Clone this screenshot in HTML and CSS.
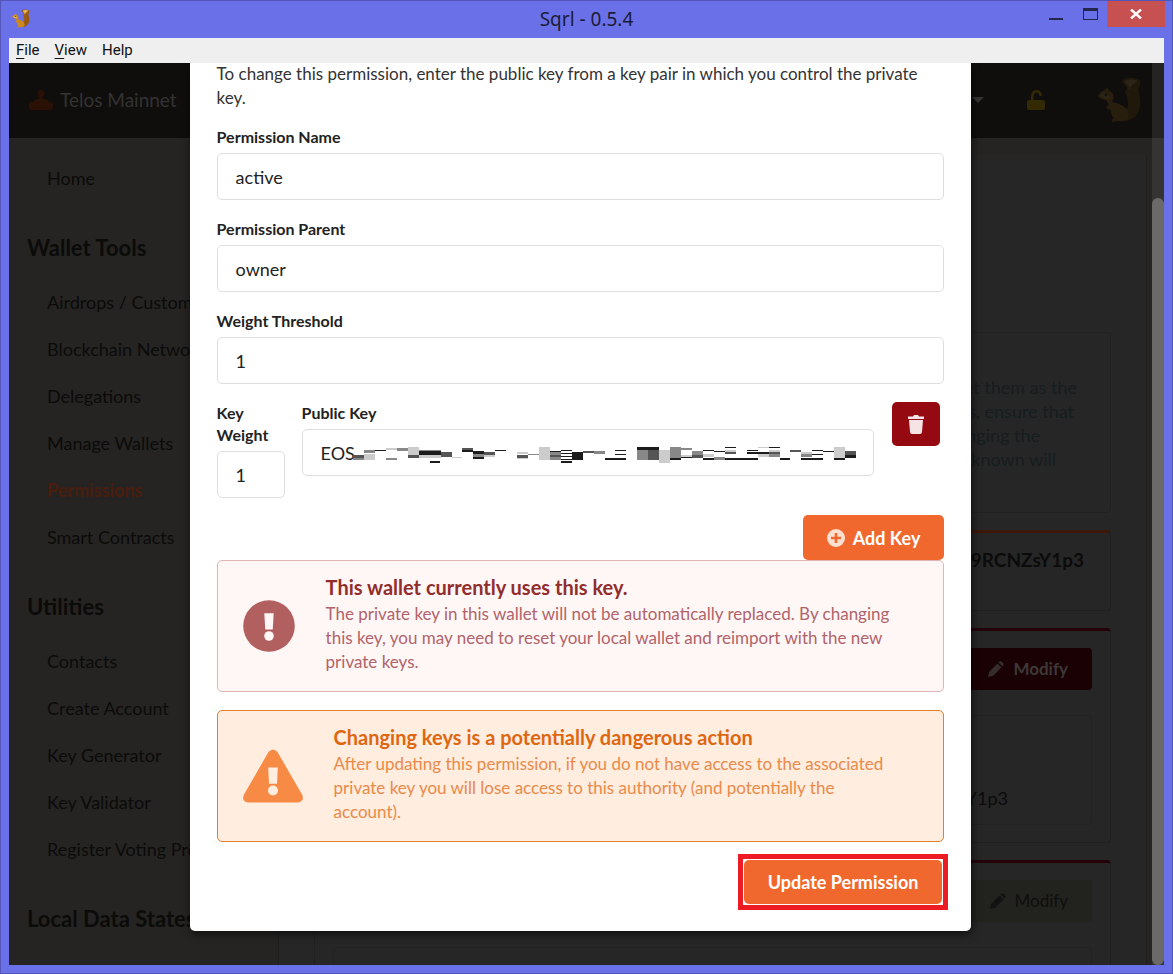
FILE: index.html
```html
<!DOCTYPE html>
<html lang="en">
<head>
<meta charset="utf-8">
<title>Sqrl - 0.5.4</title>
<link rel="stylesheet" href="styles.css">
</head>
<body>
<svg width="0" height="0" class="defs" aria-hidden="true">
  <symbol id="squirrel" viewBox="0 0 44 46">
    <path class="sq-tail" d="M26 2 Q34 -1 42 3 Q43 8 40 13 Q43 22 42 30 Q40 42 28 44 L24 38 Q31 33 30 25 Q30 20 27 15 Q31 12 27 8 Q25 6 24 5 Q25 3 26 2Z"/>
    <path class="sq-body" d="M0 19 Q3 14 7 13 L9 10 L11 14 Q16 16 16 21 Q14 24 14 25 Q20 26 25 29 Q32 34 30 41 Q28 45 20 44 L14 45 Q13 43 16 41 Q12 37 13 33 L9 32 Q7 30 11 28 Q9 25 8 23 Q3 23 0 19Z"/>
    <path class="sq-light" d="M2 19 L7 16 L13 21 L8 22Z M27 4 Q34 1 40 4 Q34 7 31 13 Q31 7 27 6Z"/>
    <circle class="sq-eye" cx="8" cy="18" r="1.4"/>
  </symbol>
  <symbol id="pencil" viewBox="0 0 16 16">
    <path d="M0 16 L1.200 10.800 L9.500 2.500 L13.500 6.500 L5.200 14.800 Z M10.500 1.500 Q12.300 -0.500 14 1 L15 2 Q16.500 3.700 14.500 5.500 Z"/>
  </symbol>
</svg>
<div class="window">
  <header class="titlebar">
    <svg class="app-icon"><use href="#squirrel"/></svg>
    <h1 class="window-title">Sqrl - 0.5.4</h1>
    <div class="window-controls">
      <button class="control" aria-label="Minimize"><span class="minimize"></span></button>
      <button class="control" aria-label="Maximize"><span class="maximize"></span></button>
      <button class="control close" aria-label="Close">
        <svg width="12" height="10" viewBox="0 0 12 10"><path d="M1 0.500 L11 9.500 M11 0.500 L1 9.500" stroke="#fff" stroke-width="2.400"/></svg>
      </button>
    </div>
  </header>
  <nav class="menubar">
    <button><u>F</u>ile</button>
    <button><u>V</u>iew</button>
    <button>Help</button>
  </nav>
  <div class="viewport">
    <div class="app">
      <header class="app-header">
        <svg class="network-icon" viewBox="0 0 24 20"><path d="M8.500 3.500 Q8.500 0 12 0 Q15.500 0 15.500 3.500 Q15.500 6 13.500 7 V8.500 Q19 9 19.500 12 H22 Q24 12 24 14 V18 Q24 20 22 20 H2 Q0 20 0 18 V14 Q0 12 2 12 H4.500 Q5 9 10.500 8.500 V7 Q8.500 6 8.500 3.500Z"/></svg>
        <span class="network-name">Telos Mainnet</span>
        <div class="header-tools">
          <span class="caret"></span>
          <svg class="lock-icon" viewBox="0 0 18 20"><path d="M2 10 H4 V7 Q4 0 9.500 0 Q14.500 0 15 6 H12.500 Q12 2.500 9.500 2.500 Q6.500 2.500 6.500 7 V10 H16 Q18 10 18 12 V18 Q18 20 16 20 H2 Q0 20 0 18 V12 Q0 10 2 10Z"/></svg>
          <svg class="header-logo"><use href="#squirrel"/></svg>
        </div>
      </header>
      <div class="columns">
        <nav class="sidebar">
          <a href="#">Home</a>
          <h2>Wallet Tools</h2>
          <a href="#">Airdrops / Custom</a>
          <a href="#">Blockchain Networks</a>
          <a href="#">Delegations</a>
          <a href="#">Manage Wallets</a>
          <a href="#" class="active">Permissions</a>
          <a href="#">Smart Contracts</a>
          <h2>Utilities</h2>
          <a href="#">Contacts</a>
          <a href="#">Create Account</a>
          <a href="#">Key Generator</a>
          <a href="#">Key Validator</a>
          <a href="#">Register Voting Proxy</a>
          <h2>Local Data States</h2>
        </nav>
        <main class="content">
          <section class="notice">
            <span class="line-a">set them as the</span>
            <span class="line-b">keys, ensure that</span>
            <span class="line-c">changing the</span>
            <span class="line-d">unknown will</span>
          </section>
          <section class="card card-key"><h3>9RCNZsY1p3</h3></section>
          <section class="card card-red">
            <button class="modify modify-red"><svg><use href="#pencil"/></svg>Modify</button>
            <div class="key-box">Y1p3</div>
          </section>
          <section class="card card-red card-last">
            <button class="modify"><svg><use href="#pencil"/></svg>Modify</button>
            <div class="key-box"></div>
          </section>
        </main>
      </div>
      <div class="overlay">
        <form class="modal" role="dialog">
          <p class="intro">To change this permission, enter the public key from a key pair in which you control the private key.</p>
          <div class="field">
            <label for="name">Permission Name</label>
            <input id="name" type="text" value="active">
          </div>
          <div class="field">
            <label for="parent">Permission Parent</label>
            <input id="parent" type="text" value="owner">
          </div>
          <div class="field">
            <label for="threshold">Weight Threshold</label>
            <input id="threshold" type="text" value="1">
          </div>
          <div class="key-row">
            <div class="field weight">
              <label for="weight">Key Weight</label>
              <input id="weight" type="text" value="1">
            </div>
            <div class="field public-key">
              <label for="key">Public Key</label>
              <div class="masked">
                <input id="key" type="text" value="EOS">
                <svg class="mask" width="503" height="17" viewBox="0 0 503 17" shape-rendering="crispEdges" aria-hidden="true">
                  <path fill="#1c1c1c" d="M22 3h11v1h-11z M66 4h22v4h-22z M77 14h10v2h-10z M109 3h11v2h-11z M120 4h11v3h-11z M120 10h11v2h-11z M142 3h11v1h-11z M197 4h11v1h-11z M208 3h11v1h-11z M208 6h11v1h-11z M208 9h11v1h-11z M208 12h11v1h-11z M208 14h11v2h-11z M219 5h11v8h-11z M252 11h21v2h-21z M262 3h11v1h-11z M262 7h11v1h-11z M284 0h22v3h-22z M317 11h11v2h-11z M328 10h11v1h-11z M350 3h11v1h-11z M350 11h11v2h-11z M361 4h11v1h-11z M372 0h11v1h-11z M372 11h33v2h-33z M394 3h11v1h-11z M394 5h22v2h-22z M416 0h11v1h-11z M427 11h10v2h-10z M448 11h22v2h-22z M459 3h11v1h-11z M459 7h11v1h-11z M470 4h11v1h-11z M481 11h11v2h-11z M492 8h11v3h-11z"/>
                  <path fill="#555" d="M0 8h11v3h-11z M55 8h11v3h-11z M88 5h11v5h-11z M109 1h11v2h-11z M131 5h11v3h-11z M164 8h11v3h-11z M197 8h11v2h-11z M230 4h11v2h-11z M295 3h11v10h-11z M339 8h11v3h-11z M372 5h11v2h-11z M416 5h11v2h-11z M437 3h11v2h-11z M492 4h11v4h-11z"/>
                  <path fill="#888" d="M0 11h11v2h-11z M11 3h11v3h-11z M33 11h11v2h-11z M44 1h11v3h-11z M66 3h22v1h-22z M120 7h11v3h-11z M175 7h11v1h-11z M197 5h11v3h-11z M197 10h11v3h-11z M241 4h11v3h-11z M284 3h11v10h-11z M317 0h11v11h-11z M328 1h11v2h-11z M339 4h11v4h-11z M361 10h11v3h-11z M416 7h11v3h-11z M448 7h11v3h-11z"/>
                  <path fill="#ccc" d="M11 7h11v6h-11z M33 1h11v2h-11z M55 0h11v8h-11z M66 8h22v3h-22z M99 10h10v1h-10z M131 8h11v2h-11z M164 5h11v2h-11z M164 11h11v1h-11z M186 0h11v13h-11z M306 3h11v13h-11z M328 8h11v2h-11z M350 7h11v3h-11z M372 3h11v2h-11z M405 0h11v1h-11z M405 7h11v3h-11z M416 3h11v2h-11z M448 5h11v2h-11z M481 0h11v11h-11z"/>
                </svg>
              </div>
            </div>
            <button type="button" class="remove" aria-label="Remove key">
              <svg width="18" height="20" viewBox="0 0 18 20"><path d="M1 2.500 H6 L7 1 H11 L12 2.500 H17 V5 H1Z M2 6 H16 L15 18 Q14.800 20 13 20 H5 Q3.200 20 3 18Z"/></svg>
            </button>
          </div>
          <div class="actions">
            <button type="button" class="primary add">
              <svg width="18" height="18" viewBox="0 0 18 18"><circle cx="9" cy="9" r="9" fill="#fbe0d2"/><path d="M9 4 V14 M4 9 H14" stroke="#f0682d" stroke-width="2.600"/></svg>
              Add Key
            </button>
          </div>
          <div class="message error">
            <svg width="52" height="52" viewBox="0 0 52 52"><circle cx="26" cy="26" r="25.800" fill="#b15f5f"/><path fill="#fff6f6" d="M21.300 13.200 H30.700 L29.700 29.500 H22.300Z"/><circle cx="26" cy="36" r="4.800" fill="#fff6f6"/></svg>
            <div>
              <h2>This wallet currently uses this key.</h2>
              <p>The private key in this wallet will not be automatically replaced. By changing this key, you may need to reset your local wallet and reimport with the new private keys.</p>
            </div>
          </div>
          <div class="message warning">
            <svg width="60" height="54" viewBox="0 0 60 54"><path fill="#f78b46" d="M25.500 3 Q30 -2 34.500 3 L59 45.500 Q62 52 55.500 53.500 H4.500 Q-2 52 1 45.500Z"/><path fill="#ffeddf" d="M25.200 18.500 H34.800 L34 34.800 H26Z"/><circle cx="30" cy="41.500" r="5" fill="#ffeddf"/></svg>
            <div>
              <h2>Changing keys is a potentially dangerous action</h2>
              <p>After updating this permission, if you do not have access to the associated private key you will lose access to this authority (and potentially the account).</p>
            </div>
          </div>
          <div class="actions submit">
            <div class="highlight"><button type="button" class="primary update">Update Permission</button></div>
          </div>
        </form>
      </div>
    </div>
    <div class="scrollbar"><div class="thumb"></div></div>
  </div>
</div>
</body>
</html>
```
FILE: styles.css
```css
* { box-sizing: border-box; }
body { margin: 0; font-family: Lato, "Liberation Sans", sans-serif; font-size: 18px; line-height: 24px; color: #222; }
h1, h2, h3, p { margin: 0; }
button, input { font: inherit; color: inherit; }
button { border: 0; background: none; padding: 0; }
a { text-decoration: none; color: inherit; }
.defs { position: absolute; }

.window { display: flex; flex-direction: column; height: 100vh; padding: 0 8px 8px; border: 1px solid #5356b8; background: #6a70e8; overflow: hidden; }
.titlebar { display: grid; grid-template-columns: 1fr auto 1fr; flex: none; height: 37px; }
.app-icon { width: 18px; height: 19px; margin: 8px 0 0 3px; }
.sq-tail { fill: #9c5b0c; }
.sq-body { fill: #cf8a1c; }
.sq-light { fill: #ecb85a; }
.sq-eye { fill: #3a2408; }
.window-title { font: 19px/36px "Noto Sans", sans-serif; color: #1b1c35; }
.window-controls { display: flex; justify-content: flex-end; margin-right: -1px; }
.control { display: flex; justify-content: center; width: 34px; height: 26px; }
.minimize { width: 14px; height: 2px; margin-top: 17px; background: #25274a; }
.maximize { width: 15px; height: 12px; margin-top: 7px; border: 1px solid #25274a; border-top-width: 3px; }
.close { align-items: center; width: 58px; background: #c75050; }

.menubar { display: flex; gap: 15px; flex: none; height: 25px; padding: 0 7px; background: #efefef; font: 15px/25px Roboto, sans-serif; color: #111; }
.menubar u { text-underline-offset: 3px; }

.viewport { display: flex; flex: 1; min-height: 0; }
.app { position: relative; display: flex; flex-direction: column; flex: 1; min-width: 0; overflow: hidden; background: #252422; }
.scrollbar { width: 12px; padding-top: 135px; background: linear-gradient(#262422 75px, #363432 75px); }
.thumb { height: 100%; border-radius: 6px; background: #6b6a69; }

.app-header { display: flex; align-items: center; flex: none; height: 75px; padding: 0 10px 1px 20px; background: #0f0e0c; }
.network-icon { width: 24px; height: 20px; margin-right: 7px; fill: #2b1105; }
.network-name { font-size: 19px; color: #333; }
.header-tools { display: flex; align-items: center; margin-left: auto; }
.caret { border: 6px solid transparent; border-top-color: #333; border-bottom: 0; margin-right: 43px; }
.lock-icon { width: 18px; height: 20px; margin-right: 53px; fill: #332903; }
.header-logo { width: 44px; height: 46px; opacity: 0.13; }

.columns { display: flex; flex: 1; min-height: 0; padding: 17px 5px 0 0; }
.sidebar { flex: none; width: 269px; padding-left: 18px; color: #0b0b0a; white-space: nowrap; }
.sidebar a { display: block; padding-left: 20px; line-height: 47px; }
.sidebar .active { font-weight: 700; color: #4a1d0d; }
.sidebar h2 { padding: 32px 0 17px; font-size: 22px; line-height: 28px; font-weight: 700; }
.content { display: flex; flex-direction: column; gap: 17px; flex: 1; padding: 177px 35px 0; border: solid #201f1f; border-width: 0 1px; background: #262626; color: #0b0b0b; }
.notice { display: flex; flex-direction: column; align-items: flex-end; flex: none; height: 181px; padding-top: 42px; border: 1px solid #202122; border-radius: 4px; color: #161d20; }
.line-a { margin-right: 33px; }
.line-b { margin-right: 36px; }
.line-c { margin-right: 70px; }
.line-d { margin-right: 54px; }
.card { flex: none; border: 1px solid #202020; border-top: 3px solid #3d170a; border-radius: 4px; }
.card-key { height: 81px; padding: 15px 26px; text-align: right; }
.card-key h3 { font-size: 19px; line-height: 24px; }
.card-red { height: 215px; padding: 17px 18px; border-top-color: #25020a; }
.card-last { height: 130px; }
.modify { display: flex; align-items: center; gap: 9px; min-width: 124px; height: 42px; margin-left: auto; padding: 0 24px 0 21px; border-radius: 4px; background: #22221f; color: #0f0f0f; font-size: 17px; justify-content: flex-end; }
.modify svg { width: 16px; height: 16px; fill: currentColor; opacity: 0.8; }
.modify-red { background: #1a0103; color: #3d3838; font-weight: 700; }
.key-box { height: 110px; margin-top: 25px; padding: 70px 83px 0 0; border: 1px solid #222; border-radius: 4px; text-align: right; }

.overlay { position: absolute; inset: 0; display: flex; justify-content: center; align-items: flex-start; overflow: hidden; }
.modal { width: 68.4%; padding: 0 27px 21px; border-radius: 0 0 5px 5px; background: #fff; box-shadow: 1px 3px 8px rgba(0, 0, 0, 0.6); }
.intro { margin: -1px 0 16px; font-size: 17px; color: #333; }
.field { margin-bottom: 18px; }
.field label { display: block; margin-bottom: 5px; font-size: 16px; line-height: 22px; font-weight: 700; }
.field input { display: block; width: 100%; height: 47px; padding: 0 18px; border: 1px solid #dedede; border-radius: 5px; background: #fff; outline: 0; }
.key-row { display: flex; align-items: flex-start; padding-right: 4px; }
.key-row .field { margin-bottom: 17px; }
.weight { width: 68px; margin-right: 17px; }
.public-key { flex: 1; margin-right: 18px; }
.masked { position: relative; }
.mask { position: absolute; left: 51px; top: 18px; }
.remove { display: grid; place-items: center; width: 48px; height: 44px; border-radius: 5px; background: #950911; }
.remove svg { fill: #f6e3e3; }
.actions { display: flex; justify-content: flex-end; }
.primary { display: flex; align-items: center; justify-content: center; height: 45px; border-radius: 5px; background: #f0682d; color: #fff; font-weight: 700; }
.add { gap: 8px; padding: 0 24px; }
.message { display: flex; align-items: center; gap: 31px; padding: 13px 38px 17px 25px; border: 1px solid; border-radius: 5px; }
.message svg { flex: none; margin-top: 3px; }
.message h2 { font-size: 20px; line-height: 26px; }
.message p { padding-top: 2px; font-size: 17px; }
.error { margin-bottom: 18px; border-color: #e0b4b4; background: #fff6f6; color: #b0646a; }
.error h2 { color: #912d2b; }
.warning { border-color: #e07f2c; background: #ffeddf; color: #ea8a4a; }
.warning h2 { color: #dd6712; }
.submit { margin: 12px -4px 0 0; }
.highlight { padding: 1px; border: 5px solid #ed1c24; }
.update { height: 44px; padding: 0 24px; }
```
